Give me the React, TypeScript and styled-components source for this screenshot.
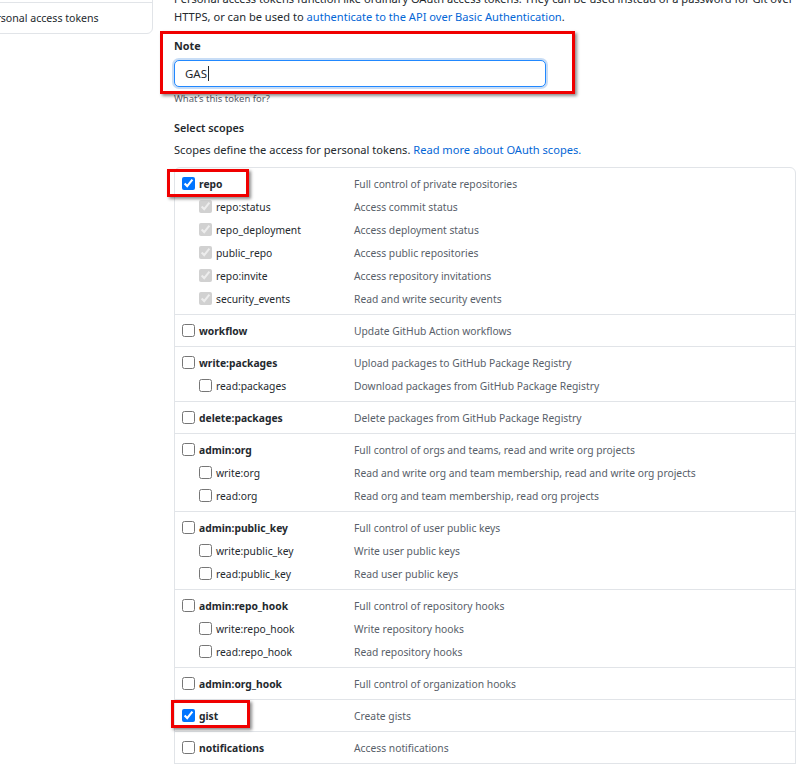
import React from 'react';
import styled, { createGlobalStyle } from 'styled-components';

const GlobalStyle = createGlobalStyle`
  html, body {
    margin: 0;
    padding: 0;
    background: #ffffff;
    overflow: hidden;
  }
  body {
    font-family: "Noto Sans", "Open Sans", sans-serif;
    color: #24292e;
  }
`;

const Page = styled.div`
  display: flex;
  align-items: flex-start;
  gap: 21px;
  margin: -60px 0 0 -33px;
  width: 1100px;
`;

const SideMenu = styled.nav`
  flex: 0 0 186px;
  box-sizing: border-box;
  border: 1px solid #e1e4e8;
  border-radius: 6px;
  background: #ffffff;
`;

const MenuItem = styled.a`
  display: block;
  padding: 8px 16px;
  line-height: 14px;
  font-size: 10.6px;
  color: #24292e;
  text-decoration: none;
  & + & {
    border-top: 1px solid #e1e4e8;
  }
`;

const Main = styled.main`
  flex: 0 0 760px;
  padding-top: 50px;
`;

const Lead = styled.p`
  margin: 0;
  font-size: 11.1px;
  line-height: 18px;
  white-space: nowrap;
  color: #24292e;
`;

const Link = styled.a`
  color: #0366d6;
  text-decoration: none;
`;

const FormGroup = styled.div`
  position: relative;
  margin-top: 12px;
`;

const FieldLabel = styled.label`
  display: block;
  font-size: 10.8px;
  line-height: 16px;
  font-weight: 700;
  color: #24292e;
`;

const Field = styled.div`
  margin-top: 6px;
  width: 372px;
  height: 27px;
  box-sizing: border-box;
  display: flex;
  align-items: center;
  padding-left: 10px;
  border: 1px solid #2188ff;
  border-radius: 5px;
  box-shadow: 0 0 0 2px rgba(3, 102, 214, 0.22);
  font-size: 11.5px;
  color: #24292e;
  background: #ffffff;
`;

const Caret = styled.span`
  display: inline-block;
  width: 1px;
  height: 15px;
  margin-left: 1px;
  background: #24292e;
`;

const Hint = styled.p`
  margin: 5px 0 0;
  font-size: 9.5px;
  line-height: 14px;
  color: #586069;
`;

const SectionTitle = styled.h3`
  margin: 14px 0 0;
  font-size: 10.8px;
  line-height: 16px;
  font-weight: 600;
  color: #24292e;
`;

const SectionNote = styled.p`
  margin: 5px 0 0;
  font-size: 11.1px;
  line-height: 18px;
  color: #24292e;
`;

const ScopeTable = styled.div`
  margin-top: 8px;
  width: 622px;
  box-sizing: border-box;
  border: 1px solid #e1e4e8;
  border-radius: 6px;
  background: #ffffff;
`;

const ScopeGroup = styled.div`
  padding: 4px 0;
  & + & {
    border-top: 1px solid #e1e4e8;
  }
`;

const Row = styled.div`
  position: relative;
  display: flex;
  align-items: center;
  height: 23px;
  padding-left: 7px;
`;

const LabelCell = styled.label<{ $child?: boolean }>`
  display: flex;
  align-items: center;
  gap: 4px;
  flex: 0 0 172px;
  box-sizing: border-box;
  padding-left: ${(p) => (p.$child ? 17 : 0)}px;
  font-size: 10.3px;
  font-weight: ${(p) => (p.$child ? 400 : 700)};
  color: #24292e;
  white-space: nowrap;
`;

const Check = styled.input`
  margin: 0;
  width: 13px;
  height: 13px;
  flex: 0 0 13px;
`;

const Desc = styled.span`
  font-size: 10.3px;
  color: #586069;
  white-space: nowrap;
`;

const Highlight = styled.div<{ $top: number; $left: number; $w: number; $h: number }>`
  position: absolute;
  top: ${(p) => p.$top}px;
  left: ${(p) => p.$left}px;
  width: ${(p) => p.$w}px;
  height: ${(p) => p.$h}px;
  box-sizing: border-box;
  border: 3px solid #f00000;
  box-shadow: 2px 2px 3px rgba(0, 0, 0, 0.45);
  pointer-events: none;
`;

type Scope = {
  name: string;
  desc: string;
  checked?: boolean;
  highlight?: { top: number; left: number; w: number; h: number };
  children?: [string, string][];
};

const scopes: Scope[] = [
  {
    name: 'repo',
    desc: 'Full control of private repositories',
    checked: true,
    highlight: { top: -3, left: -8, w: 82, h: 28 },
    children: [
      ['repo:status', 'Access commit status'],
      ['repo_deployment', 'Access deployment status'],
      ['public_repo', 'Access public repositories'],
      ['repo:invite', 'Access repository invitations'],
      ['security_events', 'Read and write security events'],
    ],
  },
  { name: 'workflow', desc: 'Update GitHub Action workflows' },
  {
    name: 'write:packages',
    desc: 'Upload packages to GitHub Package Registry',
    children: [['read:packages', 'Download packages from GitHub Package Registry']],
  },
  { name: 'delete:packages', desc: 'Delete packages from GitHub Package Registry' },
  {
    name: 'admin:org',
    desc: 'Full control of orgs and teams, read and write org projects',
    children: [
      ['write:org', 'Read and write org and team membership, read and write org projects'],
      ['read:org', 'Read org and team membership, read org projects'],
    ],
  },
  {
    name: 'admin:public_key',
    desc: 'Full control of user public keys',
    children: [
      ['write:public_key', 'Write user public keys'],
      ['read:public_key', 'Read user public keys'],
    ],
  },
  {
    name: 'admin:repo_hook',
    desc: 'Full control of repository hooks',
    children: [
      ['write:repo_hook', 'Write repository hooks'],
      ['read:repo_hook', 'Read repository hooks'],
    ],
  },
  { name: 'admin:org_hook', desc: 'Full control of organization hooks' },
  {
    name: 'gist',
    desc: 'Create gists',
    checked: true,
    highlight: { top: -4, left: -4, w: 79, h: 28 },
  },
  { name: 'notifications', desc: 'Access notifications' },
  {
    name: 'user',
    desc: 'Update ALL user data',
    children: [
      ['read:user', 'Read ALL user profile data'],
      ['user:email', 'Access user email addresses (read-only)'],
      ['user:follow', 'Follow and unfollow users'],
    ],
  },
];

export default function App() {
  return (
    <>
      <GlobalStyle />
      <Page>
        <SideMenu>
          <MenuItem href="#">GitHub Apps</MenuItem>
          <MenuItem href="#">OAuth Apps</MenuItem>
          <MenuItem href="#">Personal access tokens</MenuItem>
        </SideMenu>
        <Main>
          <Lead>
            Personal access tokens function like ordinary OAuth access tokens. They can be used instead of a password for Git over
            <br />
            HTTPS, or can be used to <Link href="#">authenticate to the API over Basic Authentication</Link>.
          </Lead>

          <FormGroup>
            <FieldLabel>Note</FieldLabel>
            <Field>
              GAS
              <Caret />
            </Field>
            <Hint>What&rsquo;s this token for?</Hint>
            <Highlight $top={-7} $left={-14} $w={415} $h={63} />
          </FormGroup>

          <SectionTitle>Select scopes</SectionTitle>
          <SectionNote>
            Scopes define the access for personal tokens. <Link href="#">Read more about OAuth scopes.</Link>
          </SectionNote>

          <ScopeTable>
            {scopes.map((s) => (
              <ScopeGroup key={s.name}>
                <Row>
                  <LabelCell>
                    <Check type="checkbox" checked={!!s.checked} readOnly />
                    {s.name}
                  </LabelCell>
                  <Desc>{s.desc}</Desc>
                  {s.highlight && (
                    <Highlight
                      $top={s.highlight.top}
                      $left={s.highlight.left}
                      $w={s.highlight.w}
                      $h={s.highlight.h}
                    />
                  )}
                </Row>
                {s.children?.map(([name, desc]) => (
                  <Row key={name}>
                    <LabelCell $child>
                      <Check type="checkbox" checked={!!s.checked} disabled={!!s.checked} readOnly />
                      {name}
                    </LabelCell>
                    <Desc>{desc}</Desc>
                  </Row>
                ))}
              </ScopeGroup>
            ))}
          </ScopeTable>
        </Main>
      </Page>
    </>
  );
}
